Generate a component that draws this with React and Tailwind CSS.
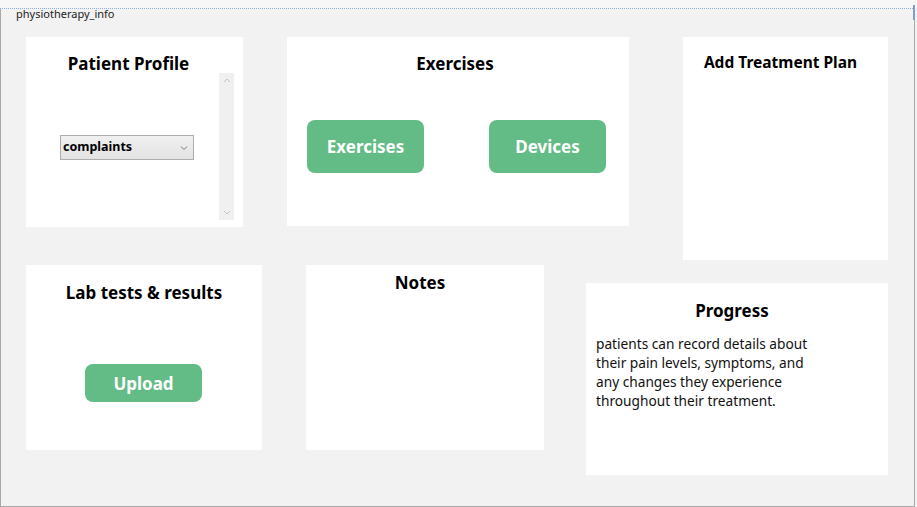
import React from "react";

const F = { fontFamily: '"Noto Sans", "Open Sans", sans-serif' };

function Btn({ children, className }) {
  return (
    <div
      className={`flex items-center justify-center rounded-[8px] bg-[#63bb85] text-white font-bold text-[17px] pt-[1px] ${className}`}
    >
      {children}
    </div>
  );
}

export default function App() {
  return (
    <div className="w-[917px] h-[507px] bg-[#f2f2f2] overflow-hidden" style={F}>
      <div className="h-[8px] bg-[#f7f7f7]" />
      <div className="relative w-[915px] h-[1px] border-t border-dotted border-[#8fb0e6]">
        <div className="absolute right-[0px] top-[-4px] w-[2px] h-[15px] bg-[#7d9fd6]" />
      </div>
      <div className="h-[498px] w-[915px] border-l border-r border-b border-solid border-[#a8a8a8]">
        <div className="pl-[15px] h-[10px] text-[11px] leading-[9px] text-[#222]">physiotherapy_info</div>
        <div className="flex items-start mt-[18px]">
          <div className="ml-[25px] w-[217px] h-[190px] bg-white flex">
            <div className="flex-1 flex flex-col items-center">
              <div className="mt-[17px] ml-[12px] text-[17px] font-bold leading-[20px]">Patient Profile</div>
              <div className="mt-[61px] self-start ml-[34px] w-[134px] h-[25px] border border-[#adadad] bg-gradient-to-b from-[#f0f0f0] to-[#e3e3e3] flex items-center justify-between px-[2px]">
                <span className="text-[12.5px] font-bold">complaints</span>
                <svg width="8" height="6" viewBox="0 0 8 6" className="mr-[3px]">
                  <path d="M1 1.5 L4 4.5 L7 1.5" stroke="#777" strokeWidth="1" fill="none" />
                </svg>
              </div>
            </div>
            <div className="mt-[36px] mr-[9px] w-[15px] h-[147px] bg-[#f0f0f0] flex flex-col items-center justify-between py-[5px]">
              <svg width="8" height="5" viewBox="0 0 8 5"><path d="M1 4 L4 1 L7 4" stroke="#c2c2c2" fill="none" /></svg>
              <svg width="8" height="5" viewBox="0 0 8 5"><path d="M1 1 L4 4 L7 1" stroke="#c2c2c2" fill="none" /></svg>
            </div>
          </div>
          <div className="ml-[44px] w-[342px] h-[189px] bg-white flex flex-col items-center">
            <div className="mt-[17px] mr-[6px] text-[17px] font-bold leading-[20px]">Exercises</div>
            <div className="mt-[46px] w-full flex justify-between px-[20px]">
              <Btn className="w-[117px] h-[53px]">Exercises</Btn>
              <Btn className="w-[117px] h-[53px] mr-[3px]">Devices</Btn>
            </div>
          </div>
          <div className="ml-[54px] w-[205px] h-[223px] bg-white flex flex-col items-center">
            <div className="mt-[16px] mr-[10px] text-[15.5px] font-bold leading-[18px]">Add Treatment Plan</div>
          </div>
        </div>
        <div className="flex items-start mt-[5px]">
          <div className="ml-[25px] w-[236px] h-[185px] bg-white flex flex-col items-center">
            <div className="mt-[18px] text-[17px] font-bold leading-[20px]">Lab tests &amp; results</div>
            <div className="mt-[61px] self-start ml-[59px]">
              <Btn className="w-[117px] h-[38px]">Upload</Btn>
            </div>
          </div>
          <div className="ml-[44px] w-[238px] h-[185px] bg-white flex flex-col items-center">
            <div className="mt-[8px] mr-[10px] text-[17px] font-bold leading-[20px]">Notes</div>
          </div>
          <div className="ml-[42px] mt-[18px] w-[302px] h-[192px] bg-white flex flex-col">
            <div className="mt-[18px] self-center mr-[10px] text-[17px] font-bold leading-[20px]">Progress</div>
            <div className="mt-[13px] ml-[10px] text-[13.7px] leading-[19px] text-[#111] w-[220px]">
              patients can record details about their pain levels, symptoms, and any changes they experience throughout their treatment.
            </div>
          </div>
        </div>
      </div>
    </div>
  );
}
